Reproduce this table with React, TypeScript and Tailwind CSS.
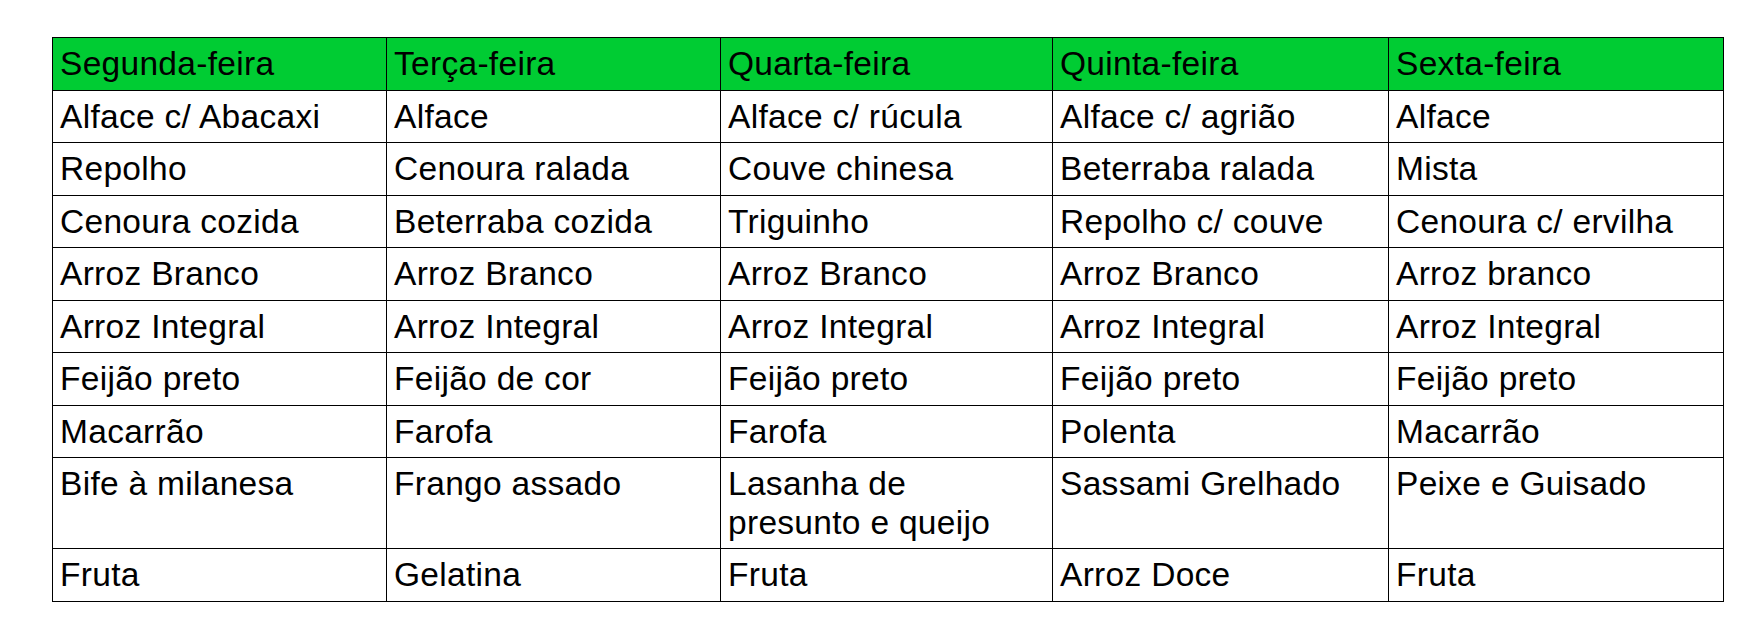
import { Fragment } from 'react';

const days = ['Segunda-feira', 'Terça-feira', 'Quarta-feira', 'Quinta-feira', 'Sexta-feira'];

const rows: string[][] = [
  ['Alface c/ Abacaxi', 'Alface', 'Alface c/ rúcula', 'Alface c/ agrião', 'Alface'],
  ['Repolho', 'Cenoura ralada', 'Couve chinesa', 'Beterraba ralada', 'Mista'],
  ['Cenoura cozida', 'Beterraba cozida', 'Triguinho', 'Repolho c/ couve', 'Cenoura c/ ervilha'],
  ['Arroz Branco', 'Arroz Branco', 'Arroz Branco', 'Arroz Branco', 'Arroz branco'],
  ['Arroz Integral', 'Arroz Integral', 'Arroz Integral', 'Arroz Integral', 'Arroz Integral'],
  ['Feijão preto', 'Feijão de cor', 'Feijão preto', 'Feijão preto', 'Feijão preto'],
  ['Macarrão', 'Farofa', 'Farofa', 'Polenta', 'Macarrão'],
  ['Bife à milanesa', 'Frango assado', 'Lasanha de\npresunto e queijo', 'Sassami Grelhado', 'Peixe e Guisado'],
  ['Fruta', 'Gelatina', 'Fruta', 'Arroz Doce', 'Fruta'],
];

const cell = 'border-r border-b border-black pl-[7px] pr-[4px] pt-[7px] pb-[6px] leading-[38.5px] whitespace-pre-line';

export default function App() {
  return (
    <div className="min-h-screen bg-white pt-[37px] pl-[52px] font-['Liberation_Sans',Arial,sans-serif] text-[33.5px] tracking-[0.3px] text-black">
      <div className="grid w-[1672px] grid-cols-[334px_334px_332px_336px_335px] border-t border-l border-black">
        {days.map((d) => (
          <div key={d} className={`${cell} bg-[#00cc33]`}>
            {d}
          </div>
        ))}
        {rows.map((r, i) => (
          <Fragment key={i}>
            {r.map((item, j) => (
              <div key={j} className={cell}>
                {item}
              </div>
            ))}
          </Fragment>
        ))}
      </div>
    </div>
  );
}
